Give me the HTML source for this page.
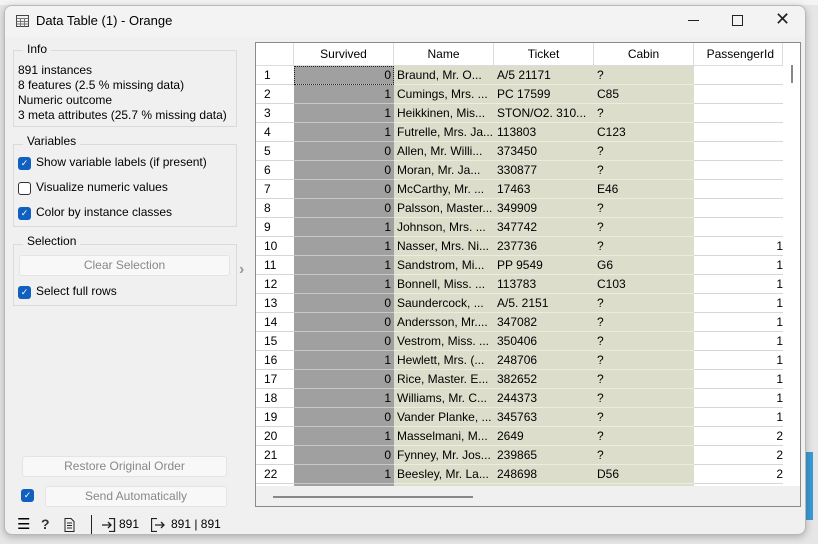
<!DOCTYPE html>
<html><head><meta charset="utf-8"><style>
*{box-sizing:border-box}
body{margin:0;width:818px;height:544px;overflow:hidden;background:#e6e6e6;font-family:"Liberation Sans",sans-serif;font-size:12px;color:#000;position:relative}
.a{position:absolute}
.win{left:4px;top:5px;width:802px;height:530px;background:#f0f0f0;border:1px solid #b8b8b8;border-radius:8px;overflow:hidden;box-shadow:0 2px 8px rgba(0,0,0,.25)}
.grp{border:1px solid #dadada;}
.lbl{background:#f0f0f0;padding:0 4px;font-size:12px}
.cb{width:13px;height:13px;border-radius:3px;background:#1060c0;color:#fff;font-size:9px;line-height:13px;text-align:center}
.cbo{width:13px;height:13px;border-radius:3px;border:1px solid #333;background:#fff}
.btn{background:#f8f8f8;border:1px solid #e4e4e4;border-radius:3px;color:#888;text-align:center;font-size:12px}
.col{position:absolute;top:23px;overflow:hidden}
.col div{height:19px;line-height:18px;white-space:nowrap;overflow:hidden;position:relative}
.hd{position:absolute;top:0;height:23px;line-height:23px;text-align:center;border-right:1px solid #dcdcdc;border-bottom:1px solid #dcdcdc;background:#fff}
.r{left:0;width:38px}.r div{padding-left:8px;border-bottom:1px solid #d6d6d6;background:#fff}
.s{left:38px;width:100px}.s div{background:#a0a0a0;border-bottom:1px solid #c8c8c8}
.s span{position:absolute;right:3px;top:0}
.b div{background:#ddddcc;padding-left:3px;border-bottom:1px solid #ececdf}
.p{left:438px;width:89px}.p div{border-bottom:1px solid #d6d6d6;background:#fff}
.p span{position:absolute;right:0;top:0}
</style></head><body>
<div class="a" style="left:0;top:0;width:818px;height:5px;background:#f4f4f4"></div>
<div class="a" style="left:806px;top:452px;width:7px;height:68px;background:#3a9ad4"></div>
<div class="a win">
 <div class="a" style="left:0;top:0;width:802px;height:31px;background:#f3f3f3"></div>
 <svg class="a" style="left:11px;top:8px" width="14" height="14"><rect x="0.5" y="1.5" width="12" height="11" fill="none" stroke="#444"/><path d="M0.5 4.5H12.5M0.5 7.5H12.5M0.5 10H12.5M4.5 4.5V12.5M8.5 4.5V12.5" stroke="#777"/></svg>
 <div class="a" style="left:31px;top:7px;font-size:13px">Data Table (1) - Orange</div>
 <div class="a" style="left:683px;top:14px;width:11px;height:1px;background:#222"></div>
 <div class="a" style="left:727px;top:9px;width:11px;height:11px;border:1px solid #222"></div>
 <div class="a" style="left:770px;top:3px;font-size:18px;color:#222">✕</div>

 <div class="a grp" style="left:8px;top:44px;width:224px;height:77px"></div>
 <div class="a lbl" style="left:18px;top:36px">Info</div>
 <div class="a" style="left:13px;top:57px;line-height:15px">891 instances<br>8 features (2.5 % missing data)<br>Numeric outcome<br>3 meta attributes (25.7 % missing data)</div>

 <div class="a grp" style="left:8px;top:138px;width:224px;height:83px"></div>
 <div class="a lbl" style="left:18px;top:128px">Variables</div>
 <div class="a cb" style="left:13px;top:151px">✓</div><div class="a" style="left:31px;top:149px">Show variable labels (if present)</div>
 <div class="a cbo" style="left:13px;top:176px"></div><div class="a" style="left:31px;top:174px">Visualize numeric values</div>
 <div class="a cb" style="left:13px;top:201px">✓</div><div class="a" style="left:31px;top:199px">Color by instance classes</div>

 <div class="a grp" style="left:8px;top:238px;width:224px;height:62px"></div>
 <div class="a lbl" style="left:18px;top:228px">Selection</div>
 <div class="a btn" style="left:14px;top:249px;width:211px;height:21px;line-height:19px">Clear Selection</div>
 <div class="a cb" style="left:13px;top:280px">✓</div><div class="a" style="left:31px;top:278px">Select full rows</div>
 <div class="a" style="left:234px;top:255px;color:#999;font-size:16px;font-weight:bold">›</div>

 <div class="a btn" style="left:17px;top:450px;width:205px;height:21px;line-height:19px">Restore Original Order</div>
 <div class="a cb" style="left:16px;top:483px">✓</div>
 <div class="a btn" style="left:40px;top:480px;width:182px;height:21px;line-height:19px">Send Automatically</div>

 <div class="a" style="left:12px;top:511px;font-size:15px;line-height:16px">☰</div>
 <div class="a" style="left:36px;top:510px;font-size:14px;font-weight:bold;color:#333">?</div>
 <svg class="a" style="left:59px;top:512px" width="11" height="14"><path d="M1 .5H7L10 3.5V13.5H1Z M3 5H8M3 7.5H8M3 10H8" fill="none" stroke="#222"/></svg>
 <div class="a" style="left:86px;top:509px;width:1px;height:19px;background:#222"></div>
 <svg class="a" style="left:97px;top:512px" width="14" height="14"><path d="M7 .5H12.5V13.5H7 M0 7H9 M6 4L9 7L6 10" fill="none" stroke="#222" stroke-width="1.3"/></svg>
 <div class="a" style="left:114px;top:511px">891</div>
 <svg class="a" style="left:146px;top:512px" width="16" height="14"><path d="M6 .5H.5V13.5H6 M4 7H13 M10 4L13 7L10 10" fill="none" stroke="#222" stroke-width="1.3"/></svg>
 <div class="a" style="left:166px;top:511px">891 | 891</div>

 <div class="a" style="left:250px;top:36px;width:546px;height:465px;border:1px solid #8a8a8a;background:#f0f0f0"></div>
 <div class="a" style="left:251px;top:37px;width:544px;height:443px;background:#fff;overflow:hidden">
  <div class="hd" style="left:0;width:38px"></div>
  <div class="hd" style="left:38px;width:100px">Survived</div>
  <div class="hd" style="left:138px;width:100px">Name</div>
  <div class="hd" style="left:238px;width:100px">Ticket</div>
  <div class="hd" style="left:338px;width:100px">Cabin</div>
  <div class="hd" style="left:438px;width:89px;text-align:right;padding-right:8px">PassengerId</div>
  <div class="col r"><div>1</div><div>2</div><div>3</div><div>4</div><div>5</div><div>6</div><div>7</div><div>8</div><div>9</div><div>10</div><div>11</div><div>12</div><div>13</div><div>14</div><div>15</div><div>16</div><div>17</div><div>18</div><div>19</div><div>20</div><div>21</div><div>22</div><div></div></div>
  <div class="col s"><div style="outline:1px dotted #222;outline-offset:-1px"><span>0</span></div><div><span>1</span></div><div><span>1</span></div><div><span>1</span></div><div><span>0</span></div><div><span>0</span></div><div><span>0</span></div><div><span>0</span></div><div><span>1</span></div><div><span>1</span></div><div><span>1</span></div><div><span>1</span></div><div><span>0</span></div><div><span>0</span></div><div><span>0</span></div><div><span>1</span></div><div><span>0</span></div><div><span>1</span></div><div><span>0</span></div><div><span>1</span></div><div><span>0</span></div><div><span>1</span></div><div></div></div>
  <div class="col b" style="left:138px;width:100px"><div>Braund, Mr. O...</div><div>Cumings, Mrs. ...</div><div>Heikkinen, Mis...</div><div>Futrelle, Mrs. Ja...</div><div>Allen, Mr. Willi...</div><div>Moran, Mr. Ja...</div><div>McCarthy, Mr. ...</div><div>Palsson, Master...</div><div>Johnson, Mrs. ...</div><div>Nasser, Mrs. Ni...</div><div>Sandstrom, Mi...</div><div>Bonnell, Miss. ...</div><div>Saundercock, ...</div><div>Andersson, Mr....</div><div>Vestrom, Miss. ...</div><div>Hewlett, Mrs. (...</div><div>Rice, Master. E...</div><div>Williams, Mr. C...</div><div>Vander Planke, ...</div><div>Masselmani, M...</div><div>Fynney, Mr. Jos...</div><div>Beesley, Mr. La...</div><div></div></div>
  <div class="col b" style="left:238px;width:100px"><div>A/5 21171</div><div>PC 17599</div><div>STON/O2. 310...</div><div>113803</div><div>373450</div><div>330877</div><div>17463</div><div>349909</div><div>347742</div><div>237736</div><div>PP 9549</div><div>113783</div><div>A/5. 2151</div><div>347082</div><div>350406</div><div>248706</div><div>382652</div><div>244373</div><div>345763</div><div>2649</div><div>239865</div><div>248698</div><div></div></div>
  <div class="col b" style="left:338px;width:100px"><div>?</div><div>C85</div><div>?</div><div>C123</div><div>?</div><div>?</div><div>E46</div><div>?</div><div>?</div><div>?</div><div>G6</div><div>C103</div><div>?</div><div>?</div><div>?</div><div>?</div><div>?</div><div>?</div><div>?</div><div>?</div><div>?</div><div>D56</div><div></div></div>
  <div class="col p"><div></div><div></div><div></div><div></div><div></div><div></div><div></div><div></div><div></div><div><span>1</span></div><div><span>1</span></div><div><span>1</span></div><div><span>1</span></div><div><span>1</span></div><div><span>1</span></div><div><span>1</span></div><div><span>1</span></div><div><span>1</span></div><div><span>1</span></div><div><span>2</span></div><div><span>2</span></div><div><span>2</span></div><div></div></div>
  <div class="a" style="left:527px;top:0;width:17px;height:443px;background:#fff"></div>
  <div class="a" style="left:535px;top:22px;width:2px;height:18px;background:#888"></div>
 </div>
 <div class="a" style="left:268px;top:490px;width:200px;height:2px;background:#888"></div>
</div>
</body></html>
